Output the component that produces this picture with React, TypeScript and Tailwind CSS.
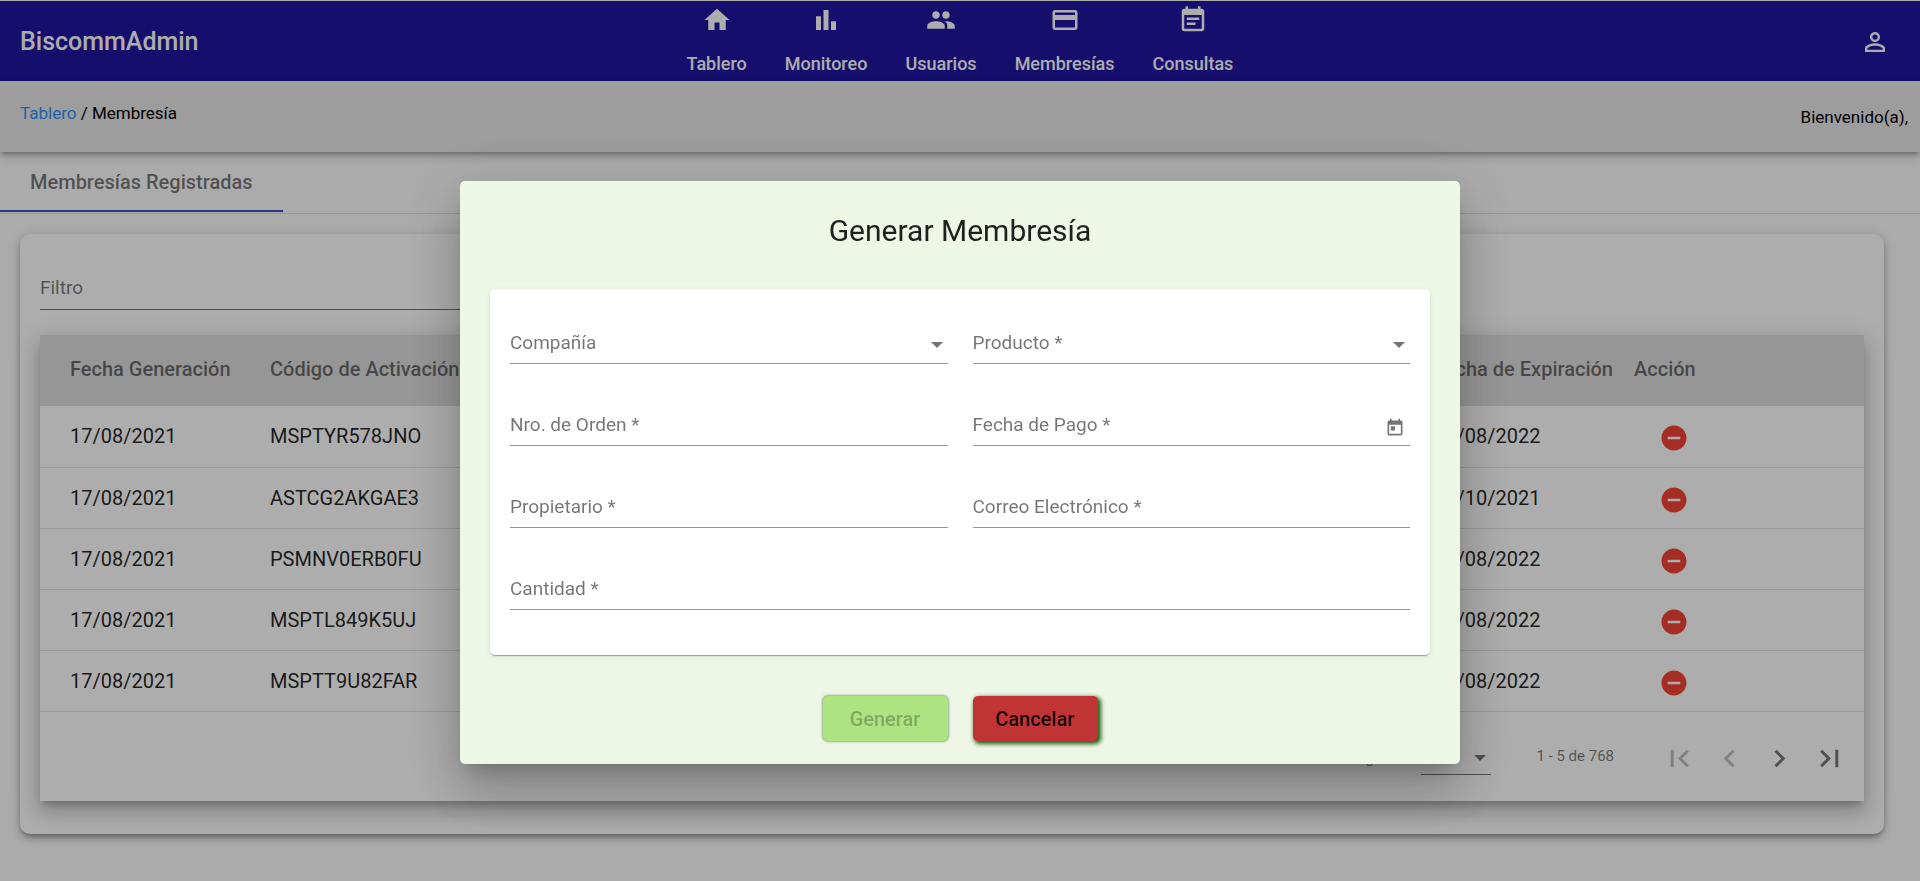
import type { ReactNode } from "react";
import type { IconType } from "react-icons";
import {
  MdBarChart,
  MdChevronLeft,
  MdChevronRight,
  MdEventNote,
  MdFirstPage,
  MdHome,
  MdLastPage,
  MdPayment,
  MdPeople,
  MdPersonOutline,
  MdRemoveCircle,
  MdToday,
} from "react-icons/md";

const navItems: { label: string; icon: IconType }[] = [
  { label: "Tablero", icon: MdHome },
  { label: "Monitoreo", icon: MdBarChart },
  { label: "Usuarios", icon: MdPeople },
  { label: "Membresías", icon: MdPayment },
  { label: "Consultas", icon: MdEventNote },
];

const rows = [
  { date: "17/08/2021", code: "MSPTYR578JNO", expires: "17/08/2022" },
  { date: "17/08/2021", code: "ASTCG2AKGAE3", expires: "17/10/2021" },
  { date: "17/08/2021", code: "PSMNV0ERB0FU", expires: "17/08/2022" },
  { date: "17/08/2021", code: "MSPTL849K5UJ", expires: "17/08/2022" },
  { date: "17/08/2021", code: "MSPTT9U82FAR", expires: "17/08/2022" },
];

function Arrow() {
  return (
    <svg viewBox="0 0 12 6" className="pointer-events-none h-[6px] w-[12px]" aria-hidden="true">
      <path d="M0 0h12L6 6z" fill="currentColor" />
    </svg>
  );
}

function Header() {
  return (
    <header className="mt-px grid h-20 grid-cols-[1fr_auto_1fr] items-center bg-[#1f15a0] text-white">
      <span className="pl-5 pt-0.5 text-[25px] font-medium">BiscommAdmin</span>
      <nav className="flex h-full">
        {navItems.map(({ label, icon: Icon }) => (
          <a key={label} href="#" className="flex flex-col items-center px-[19px] pt-1 text-lg font-medium">
            <Icon className="size-[30px]" />
            <span className="mt-4 leading-[26px]">{label}</span>
          </a>
        ))}
      </nav>
      <button type="button" aria-label="Cuenta" className="mr-[30px] justify-self-end pt-0.5">
        <MdPersonOutline className="size-[30px]" />
      </button>
    </header>
  );
}

function Paginator() {
  return (
    <div className="flex h-[89px] items-center justify-end pr-2.5 pt-1 text-[15px] text-black/54">
      <label htmlFor="page-size" className="mr-2.5">
        Registros
      </label>
      <div className="relative mr-[45px] flex h-[34px] w-[70px] items-center border-b border-black/54">
        <select id="page-size" className="h-full w-full appearance-none bg-transparent outline-none">
          <option>5</option>
        </select>
        <span className="pointer-events-none absolute right-[5px]">
          <Arrow />
        </span>
      </div>
      <span className="mr-10 pb-1">1 - 5 de 768</span>
      <PageButton label="Primera página" icon={MdFirstPage} disabled />
      <PageButton label="Página anterior" icon={MdChevronLeft} disabled />
      <PageButton label="Página siguiente" icon={MdChevronRight} />
      <PageButton label="Última página" icon={MdLastPage} />
    </div>
  );
}

function PageButton({ label, icon: Icon, disabled }: { label: string; icon: IconType; disabled?: boolean }) {
  return (
    <button
      type="button"
      aria-label={label}
      disabled={disabled}
      className="flex size-[50px] items-center justify-center text-black/54 disabled:text-black/26"
    >
      <Icon className="size-[35px]" />
    </button>
  );
}

function MembershipTable() {
  return (
    <div className="bg-white shadow-[0_6px_6px_-3px_rgba(0,0,0,0.2),0_12px_18px_1px_rgba(0,0,0,0.14),0_5px_22px_4px_rgba(0,0,0,0.12)]">
      <table className="w-full table-fixed border-collapse text-left text-xl text-black/87">
        <colgroup>
          <col className="w-[230px]" />
          <col />
          <col className="w-[200px]" />
          <col className="w-[230px]" />
        </colgroup>
        <thead className="bg-[#dedede] text-black/54">
          <tr className="h-[71px] whitespace-nowrap">
            <th className="pl-[30px] pb-1 font-medium">Fecha Generación</th>
            <th className="pb-1 font-medium">Código de Activación</th>
            <th className="pb-1 font-medium">Fecha de Expiración</th>
            <th className="pb-1 font-medium">Acción</th>
          </tr>
        </thead>
        <tbody>
          {rows.map((row) => (
            <tr key={row.code} className="h-[61px] border-b border-black/12">
              <td className="pl-[30px]">{row.date}</td>
              <td>{row.code}</td>
              <td>{row.expires}</td>
              <td>
                <button type="button" aria-label={`Eliminar ${row.code}`} className="ml-[25px] mt-1 block">
                  <MdRemoveCircle className="size-[30px] text-[#f44336]" />
                </button>
              </td>
            </tr>
          ))}
        </tbody>
      </table>
      <Paginator />
    </div>
  );
}

function Field({ id, label, children, wide }: { id: string; label: string; children: ReactNode; wide?: boolean }) {
  return (
    <div
      className={
        wide
          ? "relative col-span-2 flex h-[42px] items-center border-b border-black/42"
          : "relative flex h-[42px] items-center border-b border-black/42"
      }
    >
      <label htmlFor={id} className="pointer-events-none absolute left-0 text-[19px] leading-6 text-black/54">
        {label}
      </label>
      {children}
    </div>
  );
}

const controlClass = "h-full w-full appearance-none bg-transparent text-[19px] outline-none";

function MembershipDialog() {
  return (
    <div className="fixed inset-0 flex items-start justify-center bg-black/32 pt-[181px]">
      <div
        role="dialog"
        aria-modal="true"
        aria-labelledby="dialog-title"
        className="w-[1000px] max-w-full rounded-[5px] bg-[#eef6e6] px-[30px] pb-[23px] pt-[30px] shadow-[0_14px_19px_-9px_rgba(0,0,0,0.2),0_30px_48px_4px_rgba(0,0,0,0.14),0_11px_58px_10px_rgba(0,0,0,0.12)]"
      >
        <h2 id="dialog-title" className="mb-[38px] text-center text-3xl leading-10 text-black/87">
          Generar Membresía
        </h2>
        <form>
          <div className="grid grid-cols-2 gap-x-[25px] gap-y-10 rounded-[5px] bg-white px-5 pb-[45px] pt-[33px] shadow-[0_3px_1px_-2px_rgba(0,0,0,0.2),0_1px_1px_0_rgba(0,0,0,0.14),0_1px_4px_0_rgba(0,0,0,0.12)]">
            <Field id="company" label="Compañía">
              <select id="company" className={controlClass} />
              <span className="pointer-events-none absolute right-[5px] pt-1 text-black/54">
                <Arrow />
              </span>
            </Field>
            <Field id="product" label="Producto *">
              <select id="product" className={controlClass} />
              <span className="pointer-events-none absolute right-[5px] pt-1 text-black/54">
                <Arrow />
              </span>
            </Field>
            <Field id="order" label="Nro. de Orden *">
              <input id="order" className={controlClass} />
            </Field>
            <Field id="paid" label="Fecha de Pago *">
              <input id="paid" className={controlClass} />
              <button type="button" aria-label="Abrir calendario" className="mr-[5px] pt-1.5 text-black/54">
                <MdToday className="size-5" />
              </button>
            </Field>
            <Field id="owner" label="Propietario *">
              <input id="owner" className={controlClass} />
            </Field>
            <Field id="email" label="Correo Electrónico *">
              <input id="email" type="email" className={controlClass} />
            </Field>
            <Field id="quantity" label="Cantidad *" wide>
              <input id="quantity" className={controlClass} />
            </Field>
          </div>
          <div className="mt-[41px] flex justify-center gap-[25px]">
            <button
              type="submit"
              disabled
              className="h-[45px] w-[125px] rounded-[5px] bg-[#ade380] text-xl font-medium text-black/26 shadow-[0_0_3px_#2c6a1f]"
            >
              Generar
            </button>
            <button
              type="button"
              className="h-[45px] w-[125px] rounded-[5px] bg-[#c03434] text-xl font-medium text-black/87 shadow-[2px_2px_4px_1px_#1f5a14]"
            >
              Cancelar
            </button>
          </div>
        </form>
      </div>
    </div>
  );
}

export default function App() {
  return (
    <div className="flex min-h-screen flex-col bg-[#fdfdfd] font-[Roboto,sans-serif]">
      <Header />
      <div className="flex h-[71px] items-start justify-between bg-[#e7e7e7] pl-5 pr-3 text-[17px] leading-6 shadow-[0_3px_5px_-1px_rgba(0,0,0,0.3),0_6px_10px_0_rgba(0,0,0,0.14)]">
        <nav aria-label="Ruta" className="pt-5">
          <a href="#" className="text-[#2b90ff]">
            Tablero
          </a>{" "}
          / Membresía
        </nav>
        <span className="pt-6">Bienvenido(a),</span>
      </div>
      <div role="tablist" className="flex h-[62px] border-b border-black/12 pb-px">
        <button
          type="button"
          role="tab"
          aria-selected="true"
          className="border-b-2 border-[#3f51b5] px-[30px] pt-0.5 text-xl font-medium text-black/54"
        >
          Membresías Registradas
        </button>
      </div>
      <main className="ml-5 mr-9 mt-5 rounded-[10px] bg-white px-5 pb-[33px] pt-[34px] shadow-[0_3px_5px_-1px_rgba(0,0,0,0.3),0_6px_10px_0_rgba(0,0,0,0.14),0_1px_14px_0_rgba(0,0,0,0.12)]">
        <div className="mb-[25px] flex h-[42px] w-1/2 items-center gap-4 border-b border-black/54">
          <label htmlFor="filter" className="text-[19px] text-black/54">
            Filtro
          </label>
          <input id="filter" className="h-full flex-1 bg-transparent text-[19px] outline-none" />
        </div>
        <MembershipTable />
      </main>
      <MembershipDialog />
    </div>
  );
}
